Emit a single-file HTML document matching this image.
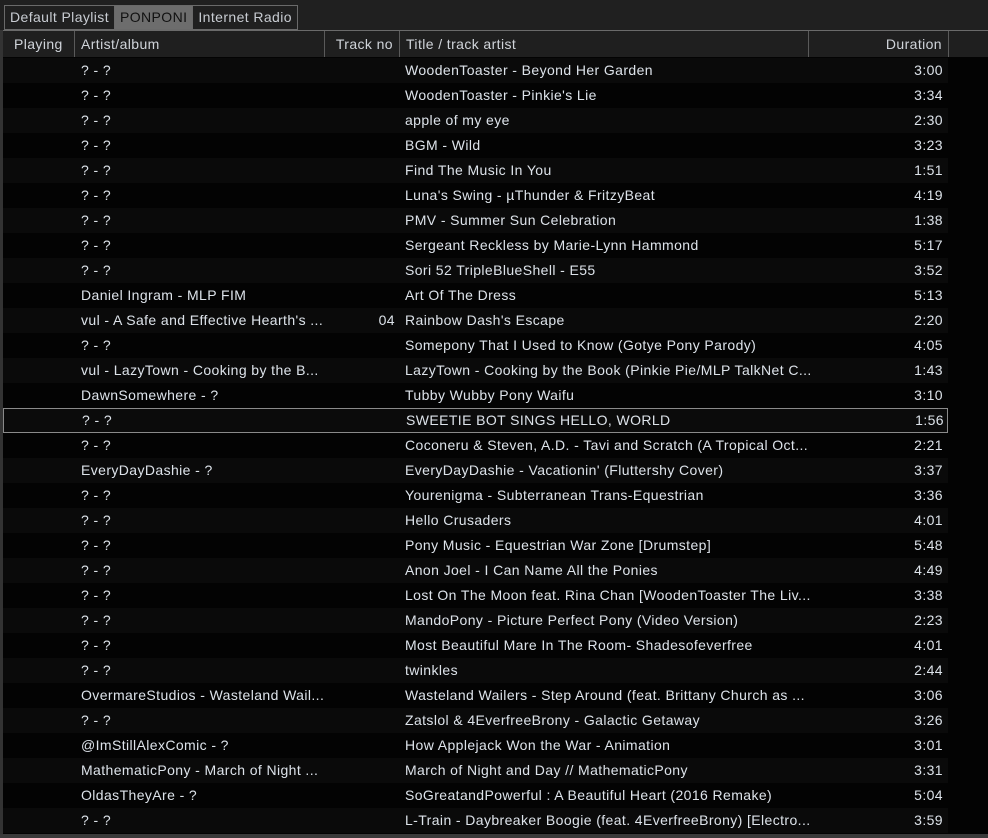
<!DOCTYPE html>
<html><head><meta charset="utf-8"><style>
*{margin:0;padding:0;box-sizing:border-box}
body{width:988px;height:838px;background:#202020;font-family:"Liberation Sans",sans-serif;font-size:14px;letter-spacing:0.4px;color:#dde3ea;position:relative;overflow:hidden}
.tabs{position:absolute;left:4px;top:5px;height:25px;display:flex;border:1px solid #6a6a6a}
.tab{height:23px;line-height:23px;padding:0 5px;color:#c8ccd2;border-right:1px solid #6a6a6a}
.tab:last-child{border-right:none}
.tab.a{background:#6d6d6d;color:#111}
.hdr{position:absolute;left:3px;top:30px;width:985px;height:27px;border-top:1px solid #6a6a6a;background:#1f1f1f;color:#d0d4da}
.h{position:absolute;top:0;height:26px;line-height:26px;border-right:1px solid #5a5a5a;padding:0 6px}
.list{position:absolute;left:3px;top:57px;width:985px;height:777px;background:#030303}
.bot{position:absolute;left:0;top:834px;width:988px;height:4px;background:#3a3a3a}
.lft{position:absolute;left:0;top:30px;width:3px;height:808px;background:#333}
.r{position:absolute;left:0;width:945px;height:25px;line-height:25px}
.r.o{background:#0a0a0a}
.r.sel{border:1px solid #8a8a8a;background:#0b0b0b;line-height:23px}
.r span{position:absolute;top:0;white-space:nowrap;overflow:hidden}
.c1{left:78px;width:246px}
.c2{left:322px;width:70px;text-align:right}
.c3{left:402px;width:410px}
.c4{left:806px;width:134px;text-align:right}
</style></head><body>
<div class="lft"></div>
<div class="tabs"><div class="tab">Default Playlist</div><div class="tab a">PONPONI</div><div class="tab">Internet Radio</div></div>
<div class="hdr">
<div class="h" style="left:0;width:72px;padding-left:11px">Playing</div>
<div class="h" style="left:72px;width:250px">Artist/album</div>
<div class="h" style="left:322px;width:75px;text-align:right">Track no</div>
<div class="h" style="left:397px;width:409px">Title / track artist</div>
<div class="h" style="left:806px;width:140px;text-align:right">Duration</div>
</div>
<div class="list" id="l"></div>
<div class="bot"></div>
<script>
var d=[["? - ?","","WoodenToaster - Beyond Her Garden","3:00"],["? - ?","","WoodenToaster - Pinkie's Lie","3:34"],["? - ?","","apple of my eye","2:30"],["? - ?","","BGM - Wild","3:23"],["? - ?","","Find The Music In You","1:51"],["? - ?","","Luna's Swing - µThunder &amp; FritzyBeat","4:19"],["? - ?","","PMV - Summer Sun Celebration","1:38"],["? - ?","","Sergeant Reckless by Marie-Lynn Hammond","5:17"],["? - ?","","Sori 52 TripleBlueShell - E55","3:52"],["Daniel Ingram - MLP FIM","","Art Of The Dress","5:13"],["vul - A Safe and Effective Hearth's ...","04","Rainbow Dash's Escape","2:20"],["? - ?","","Somepony That I Used to Know (Gotye Pony Parody)","4:05"],["vul - LazyTown - Cooking by the B...","","LazyTown - Cooking by the Book (Pinkie Pie/MLP TalkNet C...","1:43"],["DawnSomewhere - ?","","Tubby Wubby Pony Waifu","3:10"],["? - ?","","SWEETIE BOT SINGS HELLO, WORLD","1:56"],["? - ?","","Coconeru &amp; Steven, A.D. - Tavi and Scratch (A Tropical Oct...","2:21"],["EveryDayDashie - ?","","EveryDayDashie - Vacationin' (Fluttershy Cover)","3:37"],["? - ?","","Yourenigma - Subterranean Trans-Equestrian","3:36"],["? - ?","","Hello Crusaders","4:01"],["? - ?","","Pony Music - Equestrian War Zone [Drumstep]","5:48"],["? - ?","","Anon Joel - I Can Name All the Ponies","4:49"],["? - ?","","Lost On The Moon feat. Rina Chan [WoodenToaster The Liv...","3:38"],["? - ?","","MandoPony - Picture Perfect Pony (Video Version)","2:23"],["? - ?","","Most Beautiful Mare In The Room- Shadesofeverfree","4:01"],["? - ?","","twinkles","2:44"],["OvermareStudios - Wasteland Wail...","","Wasteland Wailers - Step Around (feat. Brittany Church as ...","3:06"],["? - ?","","Zatslol &amp; 4EverfreeBrony - Galactic Getaway","3:26"],["@ImStillAlexComic - ?","","How Applejack Won the War - Animation","3:01"],["MathematicPony - March of Night ...","","March of Night and Day // MathematicPony","3:31"],["OldasTheyAre - ?","","SoGreatandPowerful : A Beautiful Heart (2016 Remake)","5:04"],["? - ?","","L-Train - Daybreaker Boogie (feat. 4EverfreeBrony) [Electro...","3:59"]];
var h="";d.forEach(function(r,i){var c="r"+(i%2==0?" o":"")+(i==14?" sel":"");h+='<div class="'+c+'" style="top:'+(1+i*25)+'px"><span class="c1">'+r[0]+'</span><span class="c2">'+r[1]+'</span><span class="c3">'+r[2]+'</span><span class="c4">'+r[3]+'</span></div>'});
document.getElementById("l").innerHTML=h;
</script>
</body></html>
